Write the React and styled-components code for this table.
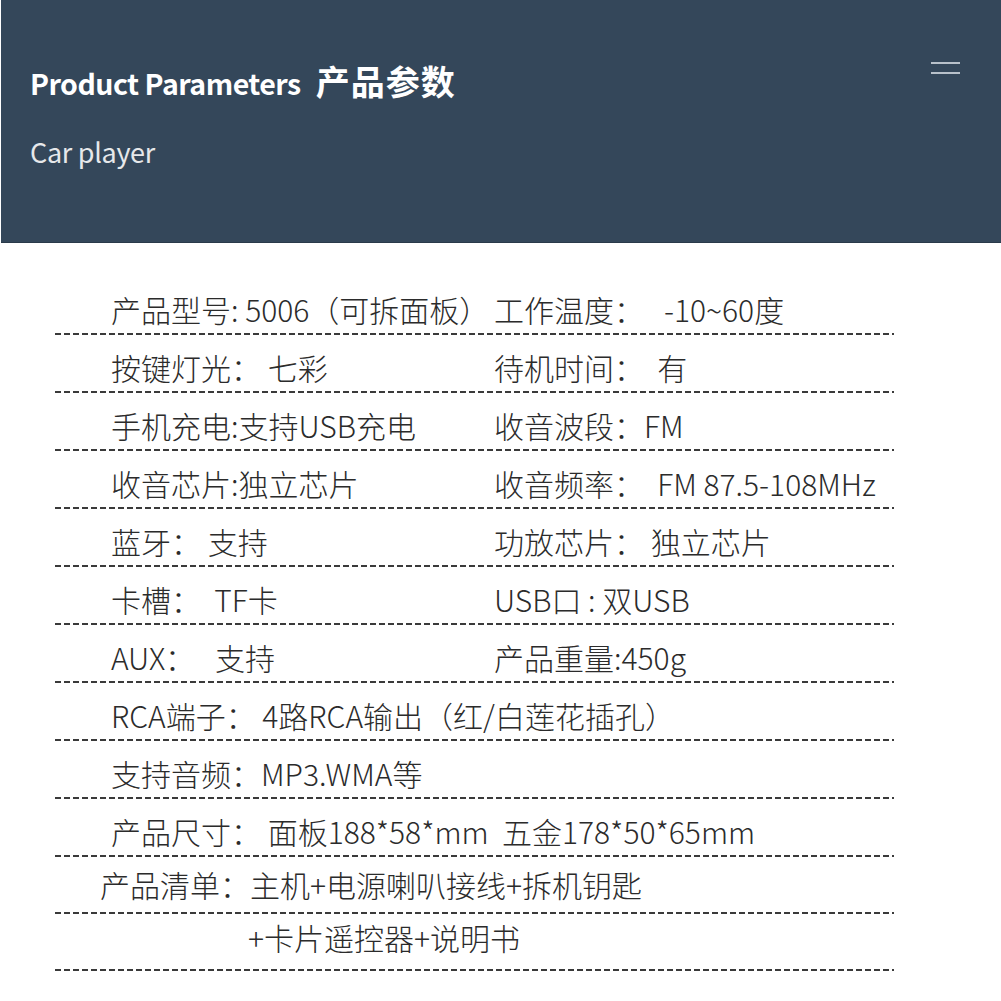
import React from "react";
import styled, { createGlobalStyle } from "styled-components";

const Global = createGlobalStyle`
  html, body { margin: 0; padding: 0; background: #fff; }
  body { font-family: "Noto Sans CJK SC", "Noto Sans", sans-serif; }
`;

const Page = styled.div`
  width: 1001px;
  height: 1001px;
  background: #fff;
  overflow: hidden;
`;

const Header = styled.header`
  margin-left: 1px;
  height: 243px;
  background: #34475a;
  border-bottom: 1px solid #2a3a4a;
  display: flex;
  justify-content: space-between;
  align-items: flex-start;
  padding: 0 41px 0 29px;
  box-sizing: border-box;
`;

const TitleBlock = styled.div`
  display: flex;
  flex-direction: column;
  padding-top: 56px;
`;

const Title = styled.h1`
  margin: 0;
  display: flex;
  align-items: baseline;
  color: #fff;
  font-weight: 700;
  line-height: 50px;
`;

const TitleEn = styled.span`
  font-size: 28.5px;
  letter-spacing: -0.5px;
  margin-right: 15px;
`;

const TitleCn = styled.span`
  font-size: 34px;
  letter-spacing: 1px;
`;

const Sub = styled.div`
  margin-top: 25px;
  color: #e6e8ea;
  font-size: 27px;
  font-weight: 400;
  line-height: 38px;
  letter-spacing: -0.3px;
`;

const Menu = styled.div`
  margin-top: 62px;
  width: 29px;
  display: flex;
  flex-direction: column;
  gap: 8.5px;
`;

const MenuBar = styled.span`
  display: block;
  height: 1.5px;
  background: #b8c1ca;
`;

const Table = styled.div`
  margin: 34px 0 0 55px;
  width: 839px;
  display: flex;
  flex-direction: column;
`;

const Row = styled.div`
  display: grid;
  grid-template-columns: 383px 1fr;
  height: ${(p) => p.$h || 58}px;
  box-sizing: border-box;
  align-items: end;
  padding: 0 0 ${(p) => p.$pb ?? 8}px 56px;
  background-image: repeating-linear-gradient(
    to right,
    #3a3a3a 0 6px,
    transparent 6px 9px
  );
  background-size: 100% 2px;
  background-repeat: no-repeat;
  background-position: left bottom;
`;

const Cell = styled.div`
  font-size: 30px;
  font-weight: 300;
  color: #2b2b2b;
  line-height: 36px;
  white-space: pre;
  margin-left: ${(p) => p.$ml || 0}px;
  transform: translateY(${(p) => p.$dy || 0}px);
`;

const rows = [
  ["产品型号: 5006（可拆面板）", "工作温度：   -10~60度"],
  ["按键灯光： 七彩", "待机时间：  有"],
  ["手机充电:支持USB充电", "收音波段：FM"],
  ["收音芯片:独立芯片", "收音频率：  FM 87.5-108MHz"],
  ["蓝牙： 支持", "功放芯片： 独立芯片"],
  ["卡槽：  TF卡", "USB口 : 双USB"],
  ["AUX：   支持", "产品重量:450g"],
  ["RCA端子： 4路RCA输出（红/白莲花插孔）", ""],
  ["支持音频：MP3.WMA等", ""],
  ["产品尺寸： 面板188*58*mm  五金178*50*65mm", ""],
];

export default function App() {
  return (
    <Page>
      <Global />
      <Header>
        <TitleBlock>
          <Title>
            <TitleEn>Product Parameters</TitleEn>
            <TitleCn>产品参数</TitleCn>
          </Title>
          <Sub>Car player</Sub>
        </TitleBlock>
        <Menu>
          <MenuBar />
          <MenuBar />
        </Menu>
      </Header>
      <Table>
        {rows.map(([a, b], i) => (
          <Row key={i}>
            <Cell>{a}</Cell>
            <Cell>{b}</Cell>
          </Row>
        ))}
        <Row $h={57} $pb={12}>
          <Cell $ml={-11}>
            产品清单：<Cell as="span" $dy={5}>主机+电源喇叭接线+拆机钥匙</Cell>
          </Cell>
        </Row>
        <Row $h={57} $pb={16}>
          <Cell $ml={137}>+卡片遥控器+说明书</Cell>
        </Row>
      </Table>
    </Page>
  );
}
